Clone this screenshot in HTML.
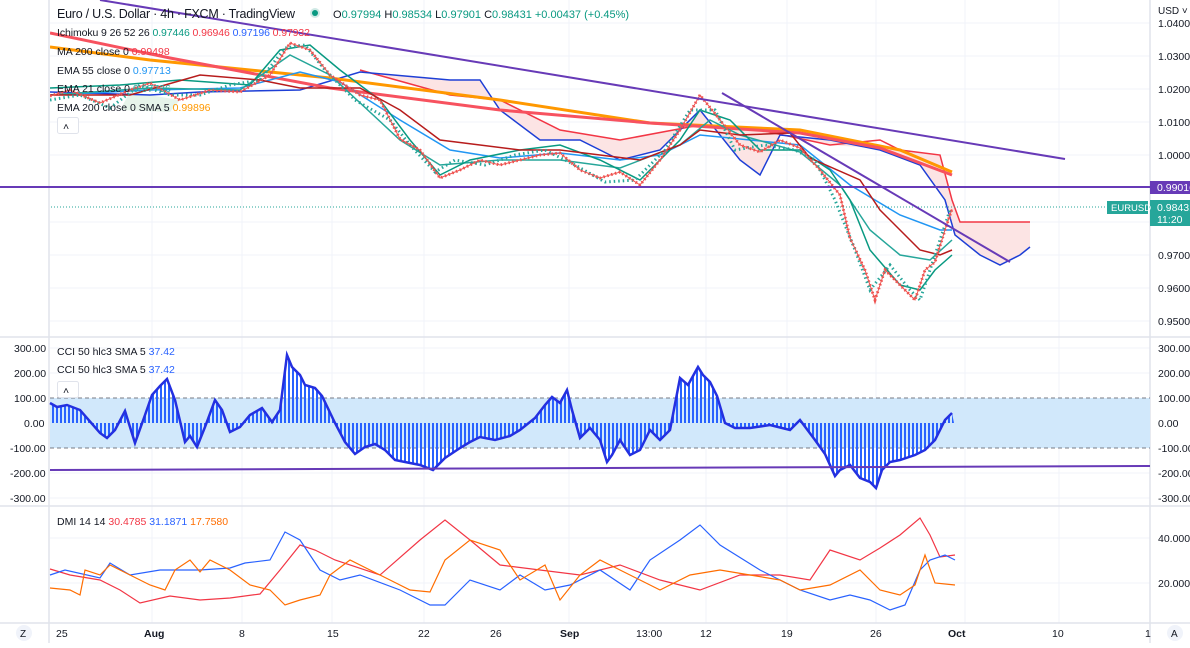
<!DOCTYPE html><html><head><style>
body{margin:0;width:1190px;height:643px;overflow:hidden;background:#fff;font-family:"Liberation Sans",sans-serif}
svg text{font-family:"Liberation Sans",sans-serif;font-size:10.5px;fill:#131722}
</style></head><body>
<svg width="1190" height="643" viewBox="0 0 1190 643">
<defs>
<pattern id="st" width="4" height="10" patternUnits="userSpaceOnUse"><rect width="2" height="10" fill="#2962ff"/></pattern>
<clipPath id="mc"><rect x="50" y="0" width="1100" height="337"/></clipPath>
</defs>
<g stroke="#f0f3fa" stroke-width="1">
<line x1="50" x2="1150" y1="23" y2="23"/><line x1="50" x2="1150" y1="56" y2="56"/><line x1="50" x2="1150" y1="89" y2="89"/><line x1="50" x2="1150" y1="122" y2="122"/><line x1="50" x2="1150" y1="155" y2="155"/><line x1="50" x2="1150" y1="222" y2="222"/><line x1="50" x2="1150" y1="255" y2="255"/><line x1="50" x2="1150" y1="288" y2="288"/><line x1="50" x2="1150" y1="321" y2="321"/>
<line x1="50" x2="1150" y1="348" y2="348"/><line x1="50" x2="1150" y1="373" y2="373"/><line x1="50" x2="1150" y1="473" y2="473"/><line x1="50" x2="1150" y1="498" y2="498"/>
<line x1="50" x2="1150" y1="538" y2="538"/><line x1="50" x2="1150" y1="583" y2="583"/>
<line x1="152" x2="152" y1="0" y2="623"/><line x1="242" x2="242" y1="0" y2="623"/><line x1="332" x2="332" y1="0" y2="623"/><line x1="424" x2="424" y1="0" y2="623"/><line x1="569" x2="569" y1="0" y2="623"/><line x1="706" x2="706" y1="0" y2="623"/><line x1="787" x2="787" y1="0" y2="623"/><line x1="876" x2="876" y1="0" y2="623"/><line x1="965" x2="965" y1="0" y2="623"/><line x1="1059" x2="1059" y1="0" y2="623"/>
</g>
<g stroke="#e0e3eb" stroke-width="1.5"><line x1="49" x2="49" y1="0" y2="643"/><line x1="1150" x2="1150" y1="0" y2="643"/><line x1="0" x2="1190" y1="337" y2="337"/><line x1="0" x2="1190" y1="506" y2="506"/><line x1="0" x2="1190" y1="623" y2="623"/></g>
<g clip-path="url(#mc)">
<polygon fill="#fce4e4" points="360,70 450,95 500,100 560,130 620,140 700,125 760,130 830,145 900,150 940,155 952,200 960,222 1030,222 1030,247 1020,255 1000,265 980,255 955,235 945,200 920,165 880,150 830,140 780,135 760,175 740,160 700,110 660,150 620,160 580,140 540,140 500,110 480,80 450,80 360,72"/>
<polygon fill="#e6f4ea" points="120,110 170,112 180,100 130,92"/>
<polyline fill="none" stroke="#f23645" stroke-width="1.5" points="360,70 450,95 500,100 560,130 620,140 700,125 760,130 830,145 880,140 900,150 940,155 952,200 960,222 1030,222"/>
<polyline fill="none" stroke="#1e3fd6" stroke-width="1.5" points="50,92 150,95 200,92 300,90 360,72 450,80 480,80 500,110 540,140 580,140 620,160 660,150 700,110 740,160 760,175 780,135 830,140 880,150 920,165 945,200 955,235 980,255 1000,265 1020,255 1030,247"/>
<polyline fill="none" stroke="#ff9800" stroke-width="3" points="50,47 150,60 330,78 500,100 650,123 800,130 900,150 952,172"/>
<polyline fill="none" stroke="#f7525f" stroke-width="3" points="50,33 170,58 330,88 500,110 650,123 800,133 880,148 952,175"/>
<polyline fill="none" stroke="#2196f3" stroke-width="1.5" points="50,95 150,90 240,88 300,72 340,82 400,120 450,150 500,158 560,153 620,160 660,155 700,135 750,140 800,145 850,185 900,215 940,230 952,230"/>
<polyline fill="none" stroke="#26a69a" stroke-width="1.5" points="50,95 150,88 240,90 290,55 330,75 400,140 440,165 500,160 560,160 620,168 680,145 710,120 740,135 800,152 840,185 870,230 900,255 930,260 952,240"/>
<polyline fill="none" stroke="#089981" stroke-width="1.5" points="50,88 120,85 180,80 250,85 280,50 310,45 340,70 380,100 410,140 440,175 470,160 520,150 560,145 600,160 640,180 680,140 700,110 730,120 760,150 800,150 830,170 850,200 870,250 900,285 920,290 935,270 952,255"/>
<polyline fill="none" stroke="#b71c1c" stroke-width="1.5" points="50,95 130,95 200,75 260,80 300,88 360,88 400,110 440,140 480,145 520,150 560,150 600,155 640,160 680,145 700,130 740,135 790,133 810,158 860,180 880,210 900,230 920,250 940,255 952,250"/>
<polyline fill="none" stroke="#ef5350" stroke-width="3" stroke-dasharray="1.5,2.5" points="50,96 70,90 100,103 130,90 150,83 180,100 210,90 240,92 270,75 290,43 310,50 330,75 360,95 380,100 400,139 420,150 440,178 460,170 480,160 500,165 520,160 540,155 560,153 580,170 600,178 620,172 640,185 660,160 680,130 700,95 720,120 740,145 760,152 780,140 800,148 820,170 840,195 850,238 865,270 875,300 885,270 900,285 915,300 925,270 935,262 945,230 952,209"/>
<polyline fill="none" stroke="#26a69a" stroke-width="3" stroke-dasharray="1.5,3" points="50,100 80,95 110,108 140,85 170,95 200,95 230,85 260,80 285,48 305,45 325,70 355,100 390,120 410,145 435,172 455,160 485,165 515,155 545,150 575,165 605,182 635,180 665,150 690,110 715,110 735,150 765,145 795,150 815,160 835,200 855,250 870,290 890,265 910,290 920,300 940,240 950,210"/>
<polyline fill="none" stroke="#ef5350" stroke-width="1" points="50,96 70,90 100,103 130,90 150,83 180,100 210,90 240,92 270,75 290,43 310,50 330,75 360,95 380,100 400,139 420,150 440,178 460,170 480,160 500,165 520,160 540,155 560,153 580,170 600,178 620,172 640,185 660,160 680,130 700,95 720,120 740,145 760,152 780,140 800,148 820,170 840,195 850,238 865,270 875,300 885,270 900,285 915,300 925,270 935,262 945,230 952,209"/>
<line x1="0" x2="1150" y1="207" y2="207" stroke="#26a69a" stroke-dasharray="1,2"/>
<line x1="100" y1="0" x2="1065" y2="159" stroke="#673ab7" stroke-width="2"/>
</g>
<line x1="722" y1="93" x2="1010" y2="262" stroke="#673ab7" stroke-width="2"/>
<line x1="0" y1="187" x2="1150" y2="187" stroke="#673ab7" stroke-width="2"/>
<rect x="50" y="398" width="1100" height="50" fill="#d1e8fb"/>
<line x1="50" x2="1150" y1="398" y2="398" stroke="#787b86" stroke-dasharray="4,3"/>
<line x1="50" x2="1150" y1="448" y2="448" stroke="#787b86" stroke-dasharray="4,3"/>
<polygon fill="url(#st)" points="50,423 50,403 57,407 67,405 80,410 100,433 107,438 115,430 125,411 135,443 145,415 152,395 160,386 167,379 175,400 185,442 190,436 197,447 205,427 215,400 222,410 230,432 240,427 250,415 262,408 272,422 280,410 287,355 292,367 300,375 305,385 315,388 322,396 335,423 345,442 355,454 365,447 375,444 385,450 395,460 405,462 420,465 433,470 445,458 460,448 470,442 480,437 495,440 510,436 520,430 535,418 545,405 552,397 560,403 567,390 572,410 580,438 590,428 600,440 607,462 612,455 620,440 630,455 640,450 650,430 660,440 670,430 680,378 688,385 698,367 703,375 710,382 717,396 725,423 735,428 750,428 770,425 790,430 800,420 815,440 825,454 835,476 840,470 850,465 860,478 870,482 876,488 882,470 890,462 900,460 915,455 925,450 935,440 945,420 952,413 954,423"/>
<polyline fill="none" stroke="#2430e0" stroke-width="2.5" points="50,403 57,407 67,405 80,410 100,433 107,438 115,430 125,411 135,443 145,415 152,395 160,386 167,379 175,400 185,442 190,436 197,447 205,427 215,400 222,410 230,432 240,427 250,415 262,408 272,422 280,410 287,355 292,367 300,375 305,385 315,388 322,396 335,423 345,442 355,454 365,447 375,444 385,450 395,460 405,462 420,465 433,470 445,458 460,448 470,442 480,437 495,440 510,436 520,430 535,418 545,405 552,397 560,403 567,390 572,410 580,438 590,428 600,440 607,462 612,455 620,440 630,455 640,450 650,430 660,440 670,430 680,378 688,385 698,367 703,375 710,382 717,396 725,423 735,428 750,428 770,425 790,430 800,420 815,440 825,454 835,476 840,470 850,465 860,478 870,482 876,488 882,470 890,462 900,460 915,455 925,450 935,440 945,420 952,413"/>
<line x1="50" y1="470" x2="1150" y2="466" stroke="#673ab7" stroke-width="2"/>
<g fill="none" stroke-width="1.2">
<polyline stroke="#f23645" points="50,569 70,575 100,580 120,590 140,603 170,596 200,600 230,598 260,594 280,570 300,545 315,550 335,560 380,575 420,540 445,520 470,540 500,565 540,570 580,575 620,565 660,580 700,590 740,575 780,575 810,580 830,550 860,560 880,548 900,535 920,518 930,535 940,557 955,555"/>
<polyline stroke="#2962ff" points="50,575 65,570 100,578 110,563 130,575 160,570 200,570 230,568 245,563 270,560 285,532 300,540 320,570 340,580 360,575 400,590 430,605 445,605 470,580 500,590 520,575 545,590 570,585 600,570 630,590 650,560 680,540 700,525 720,545 760,570 800,590 830,600 850,595 870,600 890,610 905,605 920,570 930,560 945,555 955,560"/>
<polyline stroke="#ff6d00" points="50,588 70,590 80,595 85,570 100,575 110,565 130,575 150,585 165,590 175,570 190,560 200,572 210,560 230,570 250,585 270,590 285,605 300,600 320,595 330,575 350,560 380,575 410,590 430,592 445,560 470,540 500,550 520,580 545,565 560,600 580,575 600,560 620,570 640,580 660,590 690,575 720,570 750,575 780,580 800,590 830,585 860,570 880,590 900,595 915,585 925,555 935,583 955,585"/>
</g>
<text x="57" y="18" style="font-size:12.5px" textLength="238">Euro / U.S. Dollar · 4h · FXCM · TradingView</text>
<circle cx="315" cy="13" r="5" fill="#cfe9e5"/><circle cx="315" cy="13" r="3" fill="#089981"/>
<text x="333" y="18" style="font-size:11px">O<tspan fill="#089981">0.97994</tspan> H<tspan fill="#089981">0.98534</tspan> L<tspan fill="#089981">0.97901</tspan> C<tspan fill="#089981">0.98431 +0.00437 (+0.45%)</tspan></text>
<text x="57" y="36" textLength="253">Ichimoku 9 26 52 26 <tspan fill="#089981">0.97446</tspan> <tspan fill="#f23645">0.96946</tspan> <tspan fill="#2962ff">0.97196</tspan> <tspan fill="#f23645">0.97932</tspan></text>
<text x="57" y="55">MA 200 close 0 <tspan fill="#f23645">0.99498</tspan></text>
<text x="57" y="74">EMA 55 close 0 <tspan fill="#2196f3">0.97713</tspan></text>
<text x="57" y="92">EMA 21 close 0 <tspan fill="#26a69a">0.97736</tspan></text>
<text x="57" y="111">EMA 200 close 0 SMA 5 <tspan fill="#ff9800">0.99896</tspan></text>
<rect x="57.5" y="117.5" width="21" height="16" rx="2" fill="#fff" stroke="#e0e3eb"/><text x="63" y="130">˄</text>
<text x="57" y="355">CCI 50 hlc3 SMA 5 <tspan fill="#2962ff">37.42</tspan></text>
<text x="57" y="373">CCI 50 hlc3 SMA 5 <tspan fill="#2962ff">37.42</tspan></text>
<rect x="57.5" y="381.5" width="21" height="16" rx="2" fill="#fff" stroke="#e0e3eb"/><text x="63" y="394">˄</text>
<text x="57" y="525">DMI 14 14 <tspan fill="#f23645">30.4785</tspan> <tspan fill="#2962ff">31.1871</tspan> <tspan fill="#ff6d00">17.7580</tspan></text>
<text x="1158" y="14" style="font-size:10px">USD ˅</text>
<text x="1158" y="27">1.04000</text><text x="1158" y="60">1.03000</text><text x="1158" y="93">1.02000</text><text x="1158" y="126">1.01000</text><text x="1158" y="159">1.00000</text><text x="1158" y="259">0.97000</text><text x="1158" y="292">0.96000</text><text x="1158" y="325">0.95000</text>
<rect x="1150" y="181" width="40" height="13" fill="#673ab7"/><text x="1157" y="191" style="fill:#fff">0.99016</text>
<rect x="1150" y="200" width="40" height="26" fill="#26a69a"/><text x="1157" y="211" style="fill:#fff">0.98431</text><text x="1157" y="223" style="fill:#fff">11:20</text>
<rect x="1107" y="201" width="41" height="13" fill="#26a69a"/><text x="1111" y="211" style="fill:#fff;font-size:9.5px">EURUSD</text>
<text x="14" y="352">300.00</text><text x="14" y="377">200.00</text><text x="14" y="402">100.00</text><text x="24" y="427">0.00</text><text x="10" y="452">-100.00</text><text x="10" y="477">-200.00</text><text x="10" y="502">-300.00</text>
<text x="1158" y="352">300.00</text><text x="1158" y="377">200.00</text><text x="1158" y="402">100.00</text><text x="1158" y="427">0.00</text><text x="1158" y="452">-100.00</text><text x="1158" y="477">-200.00</text><text x="1158" y="502">-300.00</text>
<text x="1158" y="542">40.0000</text><text x="1158" y="587">20.0000</text>
<circle cx="24" cy="633" r="8" fill="#f0f3fa"/><text x="20" y="637" style="font-size:10px">Z</text>
<circle cx="1175" cy="633" r="8" fill="#f0f3fa"/><text x="1171" y="637" style="font-size:10px">A</text>
<text x="56" y="637">25</text><text x="144" y="637" style="font-weight:bold">Aug</text><text x="239" y="637">8</text><text x="327" y="637">15</text><text x="418" y="637">22</text><text x="490" y="637">26</text><text x="560" y="637" style="font-weight:bold">Sep</text><text x="636" y="637">13:00</text><text x="700" y="637">12</text><text x="781" y="637">19</text><text x="870" y="637">26</text><text x="948" y="637" style="font-weight:bold">Oct</text><text x="1052" y="637">10</text><text x="1145" y="637">1</text>
</svg>
</body></html>
